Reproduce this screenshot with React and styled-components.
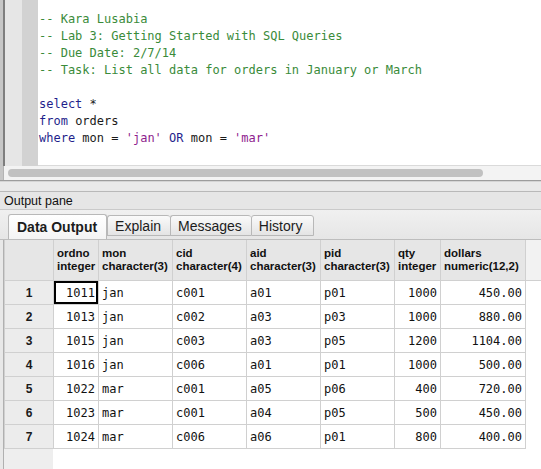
import React from "react";
import styled, { createGlobalStyle } from "styled-components";

const GlobalStyle = createGlobalStyle`
  html, body {
    margin: 0;
    padding: 0;
    background: #e8e8e8;
  }
`;

const columns = [
  { name: "ordno", type: "integer", width: 45, align: "right" },
  { name: "mon", type: "character(3)", width: 74, align: "left" },
  { name: "cid", type: "character(4)", width: 74, align: "left" },
  { name: "aid", type: "character(3)", width: 74, align: "left" },
  { name: "pid", type: "character(3)", width: 74, align: "left" },
  { name: "qty", type: "integer", width: 46, align: "right" },
  { name: "dollars", type: "numeric(12,2)", width: 85, align: "right" },
];

const rows = [
  ["1011", "jan", "c001", "a01", "p01", "1000", "450.00"],
  ["1013", "jan", "c002", "a03", "p03", "1000", "880.00"],
  ["1015", "jan", "c003", "a03", "p05", "1200", "1104.00"],
  ["1016", "jan", "c006", "a01", "p01", "1000", "500.00"],
  ["1022", "mar", "c001", "a05", "p06", "400", "720.00"],
  ["1023", "mar", "c001", "a04", "p05", "500", "450.00"],
  ["1024", "mar", "c006", "a06", "p01", "800", "400.00"],
];

const tabs = ["Data Output", "Explain", "Messages", "History"];

export default function App() {
  return (
    <Window>
      <GlobalStyle />
      <EditorFrame>
        <EditorBody>
          <GutterOuter />
          <GutterInner />
          <Code>
            <Line $kind="comment">-- Kara Lusabia</Line>
            <Line $kind="comment">-- Lab 3: Getting Started with SQL Queries</Line>
            <Line $kind="comment">-- Due Date: 2/7/14</Line>
            <Line $kind="comment">-- Task: List all data for orders in January or March</Line>
            <Line>&nbsp;</Line>
            <Line>
              <Kw>select</Kw> *
            </Line>
            <Line>
              <Kw>from</Kw> orders
            </Line>
            <Line>
              <Kw>where</Kw> mon = <Str>'jan'</Str> <Kw>OR</Kw> mon = <Str>'mar'</Str>
            </Line>
          </Code>
        </EditorBody>
        <HScroll>
          <Thumb />
        </HScroll>
      </EditorFrame>
      <Splitter />
      <PaneTitle>Output pane</PaneTitle>
      <TabStrip>
        {tabs.map((t, i) => (
          <Tab key={t} $active={i === 0}>
            {t}
          </Tab>
        ))}
      </TabStrip>
      <GridArea>
        <Grid>
          <colgroup>
            <col style={{ width: 49 }} />
            {columns.map((c) => (
              <col key={c.name} style={{ width: c.width }} />
            ))}
            <col />
          </colgroup>
          <thead>
            <tr>
              <Corner />
              {columns.map((c) => (
                <HeadCell key={c.name}>
                  {c.name}
                  <br />
                  {c.type}
                </HeadCell>
              ))}
              <HeadFiller />
            </tr>
          </thead>
          <tbody>
            {rows.map((r, ri) => (
              <tr key={ri}>
                <RowNum>{ri + 1}</RowNum>
                {r.map((v, ci) => (
                  <Cell
                    key={ci}
                    $align={columns[ci].align}
                    $selected={ri === 0 && ci === 0}
                  >
                    {v}
                  </Cell>
                ))}
                <BodyFiller />
              </tr>
            ))}
          </tbody>
        </Grid>
      </GridArea>
    </Window>
  );
}

const Window = styled.div`
  width: 541px;
  height: 469px;
  overflow: hidden;
  display: flex;
  flex-direction: column;
  background: #e8e8e8;
  font-family: "Liberation Sans", Arial, sans-serif;
`;

const EditorFrame = styled.div`
  height: 180px;
  display: flex;
  flex-direction: column;
  background: #c6c6c6;
  padding-left: 3px;
  border-bottom: 1px solid #9c9c9c;
  box-shadow: 0 1px 0 #d4d4d4;
`;

const EditorBody = styled.div`
  flex: 1;
  display: flex;
  border-left: 2px solid #7e7e7e;
  min-height: 0;
`;

const GutterOuter = styled.div`
  width: 17px;
  background: #e6e6e6;
`;

const GutterInner = styled.div`
  width: 16px;
  background: #d2d2d2;
`;

const Code = styled.div`
  flex: 1;
  background: #ffffff;
  padding: 11px 0 0 1px;
  font-family: "DejaVu Sans Mono", "Liberation Mono", monospace;
  font-size: 12px;
  line-height: 17px;
  color: #111;
  white-space: pre;
  border-bottom: 1px solid #dadada;
`;

const Line = styled.div`
  color: ${(p) => (p.$kind === "comment" ? "#3a8b3a" : "#1a1a1a")};
`;

const Kw = styled.span`
  color: #1f1f8c;
`;

const Str = styled.span`
  color: #8e1c8e;
`;

const HScroll = styled.div`
  height: 14px;
  display: flex;
  align-items: center;
  padding-left: 4px;
  background: #f3f3f3;
  border-left: 1px solid #b4b4b4;
`;

const Thumb = styled.div`
  width: 475px;
  height: 8px;
  border-radius: 4px;
  background: #c1c1c1;
`;

const Splitter = styled.div`
  height: 9px;
  margin-top: 1px;
  background: #e9e9e9;
  border-bottom: 1px solid #b9b9b9;
`;

const PaneTitle = styled.div`
  height: 17px;
  padding-left: 4px;
  font-size: 12.5px;
  line-height: 19px;
  color: #111;
  background: #e6e6e6;
  border-bottom: 1px solid #cacaca;
`;

const TabStrip = styled.div`
  height: 30px;
  display: flex;
  align-items: flex-end;
  padding: 0 0 3px 8px;
  box-sizing: border-box;
  background: linear-gradient(#f0f0f0, #e6e6e6);
  border-bottom: 1px solid #bdbdbd;
`;

const Tab = styled.div`
  height: ${(p) => (p.$active ? "25px" : "21px")};
  margin-bottom: ${(p) => (p.$active ? "-3px" : "0")};
  box-sizing: border-box;
  padding: ${(p) => (p.$active ? "3px 9px 0 8px" : "1px 9px 0 7px")};
  font-size: 14px;
  line-height: 19px;
  font-weight: ${(p) => (p.$active ? 700 : 400)};
  color: #1c1c1c;
  border: 1px solid #b8b8b8;
  border-bottom: ${(p) => (p.$active ? "none" : "1px solid #b8b8b8")};
  border-right: ${(p) => (p.$active ? "1px solid #b8b8b8" : "none")};
  border-radius: 3px 3px 0 0;
  background: ${(p) =>
    p.$active
      ? "linear-gradient(#ffffff, #f4f4f4)"
      : "linear-gradient(#fafafa, #e4e4e4)"};
  &:last-child {
    border-right: 1px solid #b8b8b8;
    padding-right: 11px;
  }
`;

const GridArea = styled.div`
  flex: 1;
  margin-left: 3px;
  background: linear-gradient(to right, #eeeeee 49px, #ffffff 49px);
  border-left: 1px solid #b0b0b0;
`;

const Grid = styled.table`
  width: 537px;
  table-layout: fixed;
  border-collapse: collapse;
  border-spacing: 0;
`;

const Corner = styled.th`
  height: 40px;
  padding: 0;
  background: #e6e6e6;
  border: 1px solid #d0d0d0;
  border-top: none;
`;

const HeadCell = styled.th`
  height: 40px;
  padding: 0 0 0 3px;
  text-align: left;
  vertical-align: middle;
  font-size: 11.5px;
  line-height: 13px;
  font-weight: 700;
  color: #111;
  white-space: nowrap;
  overflow: hidden;
  background: #e6e6e6;
  border: 1px solid #d0d0d0;
  border-top: none;
`;

const HeadFiller = styled.th`
  padding: 0;
  background: #f2f2f2;
  border-bottom: 1px solid #d0d0d0;
`;

const RowNum = styled.td`
  height: 23px;
  padding: 0;
  text-align: center;
  font-size: 12px;
  font-weight: 700;
  color: #1a1a1a;
  background: #ececec;
  border: 1px solid #d0d0d0;
`;

const Cell = styled.td`
  height: 23px;
  padding: 0 3px;
  text-align: ${(p) => p.$align};
  font-family: "DejaVu Sans Mono", "Liberation Mono", monospace;
  font-size: 12px;
  color: #111;
  background: #ffffff;
  border: 1px solid #d0d0d0;
  box-shadow: ${(p) => (p.$selected ? "inset 0 0 0 2px #000" : "none")};
`;

const BodyFiller = styled.td`
  padding: 0;
  background: #ffffff;
`;
